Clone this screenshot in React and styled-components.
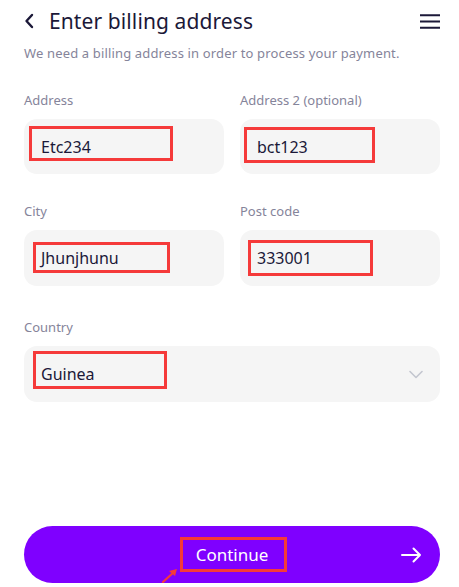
import React from "react";
import styled, { createGlobalStyle } from "styled-components";

const Global = createGlobalStyle`
  html, body { margin: 0; padding: 0; background: #ffffff; }
  body { font-family: "Noto Sans", "Open Sans", "Liberation Sans", sans-serif; }
  * { box-sizing: border-box; }
`;

const Page = styled.div`
  width: 459px;
  height: 587px;
  padding: 0 19px 0 24px;
  display: flex;
  flex-direction: column;
`;

const Header = styled.div`
  height: 42px;
  display: flex;
  align-items: center;
  justify-content: space-between;
`;

const TitleGroup = styled.div`
  display: flex;
  align-items: center;
  gap: 15px;
`;

const Title = styled.h1`
  margin: 0;
  font-size: 21px;
  font-weight: 400;
  color: #1b1838;
  letter-spacing: 0.1px;
`;

const IconButton = styled.div`
  display: flex;
  align-items: center;
  justify-content: center;
  color: #1b1838;
`;

const Subtitle = styled.p`
  margin: 2px 0 0;
  font-size: 13px;
  line-height: 18px;
  letter-spacing: 0.15px;
  color: #85849a;
`;

const Grid = styled.div`
  display: grid;
  grid-template-columns: 200px 200px;
  column-gap: 16px;
  margin-top: ${(p) => p.$top}px;
`;

const Field = styled.div`
  display: flex;
  flex-direction: column;
`;

const Label = styled.label`
  font-size: 13px;
  line-height: 18px;
  color: #85849a;
  margin-bottom: 10px;
`;

const InputBox = styled.div`
  position: relative;
  height: ${(p) => p.$h || 55}px;
  border-radius: 13px;
  background: #f5f5f5;
  display: flex;
  align-items: center;
  justify-content: space-between;
  padding: 0 17px;
  font-size: 16px;
  color: #1b1838;
`;

const Mark = styled.span`
  position: absolute;
  left: ${(p) => p.$l}px;
  top: ${(p) => p.$t}px;
  width: ${(p) => p.$w}px;
  height: ${(p) => p.$h}px;
  border: 3px solid #f53a3a;
  pointer-events: none;
`;

const Single = styled.div`
  margin-top: ${(p) => p.$top}px;
  display: flex;
  flex-direction: column;
`;

const Spacer = styled.div`
  flex: 1;
`;

const Button = styled.button`
  position: relative;
  height: 57px;
  border: none;
  border-radius: 29px;
  background: #7f00ff;
  color: #ffffff;
  font-family: inherit;
  font-size: 17px;
  display: flex;
  align-items: center;
  justify-content: center;
  margin-bottom: 4px;
  padding: 0;
`;

const ButtonArrow = styled.span`
  position: absolute;
  right: 18px;
  top: 50%;
  transform: translateY(-50%);
  display: flex;
`;

const Pointer = styled.svg`
  position: absolute;
  left: 137px;
  top: 41px;
`;

const Chevron = () => (
  <svg width="14" height="9" viewBox="0 0 14 9" fill="none">
    <path d="M1 1.5l6 6 6-6" stroke="#c3c6cf" strokeWidth="1.6" strokeLinecap="round" strokeLinejoin="round" />
  </svg>
);

export default function App() {
  return (
    <>
      <Global />
      <Page>
        <Header>
          <TitleGroup>
            <IconButton>
              <svg width="10" height="16" viewBox="0 0 10 16" fill="none">
                <path d="M8 2L2.5 8 8 14" stroke="#1b1838" strokeWidth="2.4" strokeLinecap="round" strokeLinejoin="round" />
              </svg>
            </IconButton>
            <Title>Enter billing address</Title>
          </TitleGroup>
          <IconButton>
            <svg width="20" height="15" viewBox="0 0 20 15" fill="none">
              <path d="M0 1.2h20M0 7.5h20M0 13.8h20" stroke="#1b1838" strokeWidth="2" />
            </svg>
          </IconButton>
        </Header>
        <Subtitle>We need a billing address in order to process your payment.</Subtitle>

        <Grid $top={29}>
          <Field>
            <Label>Address</Label>
            <InputBox>
              Etc234
              <Mark $l={5} $t={7} $w={144} $h={35} />
            </InputBox>
          </Field>
          <Field>
            <Label>Address 2 (optional)</Label>
            <InputBox>
              bct123
              <Mark $l={4} $t={8} $w={131} $h={36} />
            </InputBox>
          </Field>
        </Grid>

        <Grid $top={28}>
          <Field>
            <Label>City</Label>
            <InputBox $h={56}>
              Jhunjhunu
              <Mark $l={9} $t={12} $w={137} $h={31} />
            </InputBox>
          </Field>
          <Field>
            <Label>Post code</Label>
            <InputBox $h={56}>
              333001
              <Mark $l={8} $t={10} $w={125} $h={36} />
            </InputBox>
          </Field>
        </Grid>

        <Single $top={32}>
          <Label>Country</Label>
          <InputBox $h={56}>
            Guinea
            <Chevron />
            <Mark $l={9} $t={5} $w={134} $h={38} />
          </InputBox>
        </Single>

        <Spacer />

        <Button>
          <span>Continue</span>
          <ButtonArrow>
            <svg width="21" height="16" viewBox="0 0 21 16" fill="none">
              <path d="M1 8h18M12.5 1.5L19 8l-6.5 6.5" stroke="#ffffff" strokeWidth="2" strokeLinecap="round" strokeLinejoin="round" />
            </svg>
          </ButtonArrow>
          <Mark $l={156} $t={11} $w={107} $h={35} />
          <Pointer width="18" height="16" viewBox="0 0 18 16" fill="none">
            <path d="M2 15L13 5" stroke="#f53a3a" strokeWidth="2.2" strokeLinecap="round" />
            <path d="M8 4L16 2 14 9Z" fill="#f53a3a" />
          </Pointer>
        </Button>
      </Page>
    </>
  );
}
